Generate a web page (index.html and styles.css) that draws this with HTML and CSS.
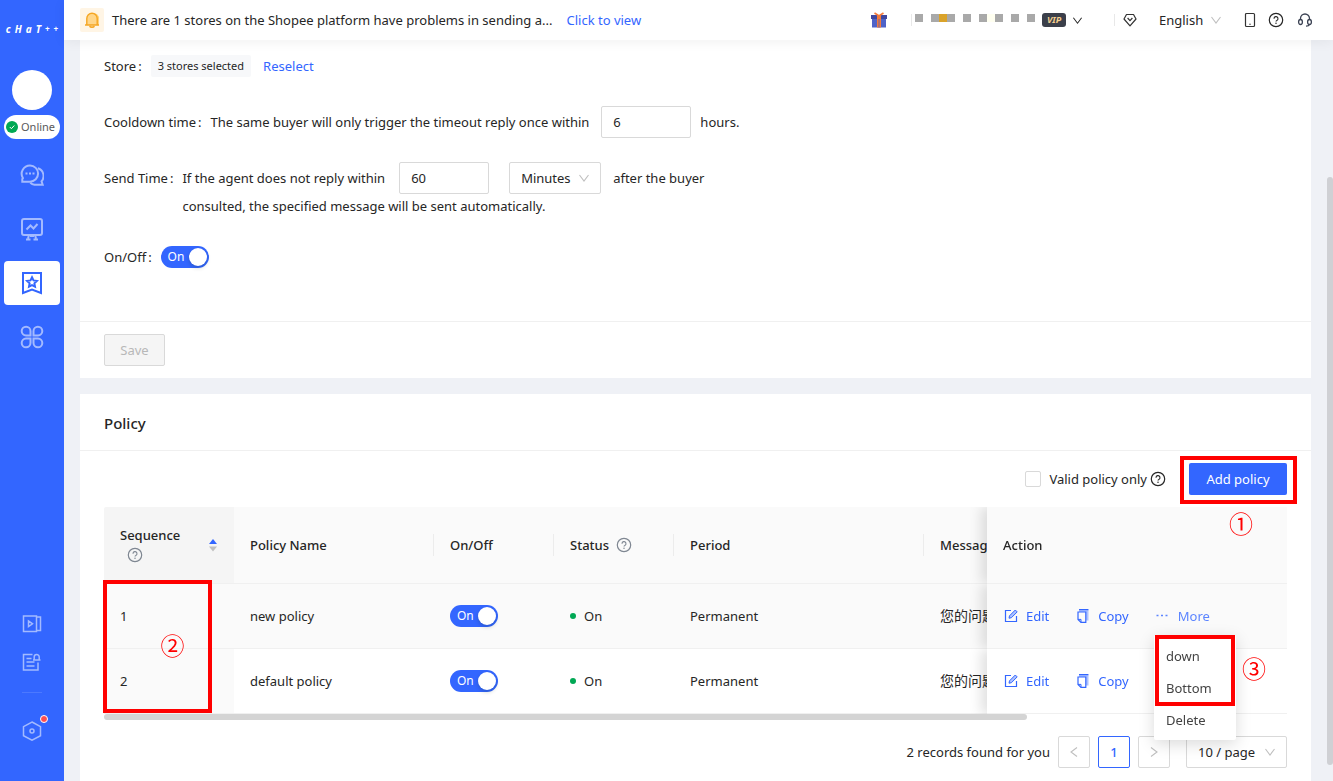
FILE: index.html
```html
<!DOCTYPE html>
<html lang="en">
<head>
<meta charset="utf-8">
<title>Timeout reply</title>
<link rel="stylesheet" href="styles.css">
</head>
<body>
<svg class="sprite" aria-hidden="true">
  <symbol id="help" viewBox="0 0 16 16"><circle cx="8" cy="8" r="6.7" fill="none" stroke="currentColor" stroke-width="1.2"/><path d="M6 6.7a2 2 0 1 1 2.9 1.7c-.6.3-.9.6-.9 1.2" fill="none" stroke="currentColor" stroke-width="1.1"/><circle cx="8" cy="11.3" r=".75" fill="currentColor"/></symbol>
  <symbol id="chevron" viewBox="0 0 12 12"><path d="M1.5 3 6 9l4.500-6" fill="none" stroke="currentColor" stroke-width="1.1"/></symbol>
  <symbol id="edit" viewBox="0 0 14 14"><path d="M7 1.500H1.500v11h11V7" fill="none" stroke="currentColor" stroke-width="1.200"/><path d="M5 9.200l.5-2.400L11.300 1l1.900 1.900-5.800 5.800z" fill="#adc2ff" stroke="currentColor"/></symbol>
  <symbol id="copy" viewBox="0 0 14 14"><path d="M3 .600h9.500v11H10V3H3z" fill="#adc2ff"/><path d="M3 .600h9.400" stroke="currentColor" stroke-width="1.200"/><path d="M2 3h7.800v10.400H5L2 10.400z" fill="none" stroke="currentColor" stroke-width="1.200"/><path d="M2 10.400h3v3" fill="none" stroke="currentColor"/></symbol>
</svg>

<div class="app">
  <aside class="sidebar">
    <div class="logo" aria-label="CHAT++"><span>c</span><span>H</span><span>a</span><span>T</span><small>+</small><small>+</small></div>
    <div class="avatar"></div>
    <button class="presence"><svg viewBox="0 0 12 12" width="12" height="12"><circle cx="6" cy="6" r="6" fill="#00a854"/><path d="M3.800 6l1.600 1.700 2.900-3.200" fill="none" stroke="#fff"/></svg>Online</button>
    <nav class="nav">
      <a href="#" aria-label="Chats"><svg viewBox="0 0 24 24" width="24" height="24"><path d="M10 2.500a8 8 0 0 1 0 16.200H2.300V16l.6-.9A8.300 8.300 0 0 1 10 2.500z"/><path d="M17.800 5.300a8 8 0 0 1 3.700 13l1.200 3.400h-8.200a7 7 0 0 1-4.200-2"/><path d="M5.500 10.500h2M9 10.500h2M12.500 10.500h2" stroke-width="2"/></svg></a>
      <a href="#" aria-label="Statistics"><svg viewBox="0 0 24 24" width="24" height="24"><rect x="2" y="2" width="20" height="16" rx="2"/><path d="M6.500 12.500l4-4 3 3L17.500 7M9 18l-1 3.500M15 18l1 3.500M6 22.500h4.500M13.500 22.500h4.500M10 19h4"/></svg></a>
      <a href="#" class="active" aria-label="Policies"><svg viewBox="0 0 24 24" width="24" height="24"><path d="M3 2h18v20l-9-3.500L3 22z"/><path d="M12 6.300l1.500 3.100 3.400.5-2.500 2.400.6 3.400-3-1.600-3 1.600.6-3.400-2.500-2.400 3.400-.5z"/></svg></a>
      <a href="#" aria-label="Apps"><svg viewBox="0 0 24 24" width="24" height="24"><path d="M10.500 10.500H6A4.400 4.400 0 1 1 10.500 6zM13.500 10.500V6a4.400 4.400 0 1 1 4.500 4.500zM10.500 13.500V18A4.400 4.400 0 1 1 6 13.500zM13.500 13.500H18a4.400 4.400 0 1 1-4.500 4.500z"/></svg></a>
    </nav>
    <div class="tools">
      <a href="#" aria-label="Tutorials"><svg viewBox="0 0 20 20" width="20" height="20"><path d="M1.500 2h13v15.500h-13zM14.500 3h4v13.500h-4M6.500 7v5.500l4-2.700z"/></svg></a>
      <a href="#" aria-label="Notices"><svg viewBox="0 0 20 20" width="20" height="20"><path d="M10.500 2.500h-9v15.500h14.500V10.500M4.500 6.500h5M4.500 10h8M4.500 14h8M11 8h7.500M12.200 8V5a2.500 2.500 0 0 1 5 0v3"/></svg></a>
      <hr>
      <a href="#" class="settings" aria-label="Settings"><svg viewBox="0 0 20 20" width="20" height="20"><path d="M10 1l8.500 4.700v9L10 19.200 1.500 14.700v-9z"/><circle cx="10" cy="10" r="2"/></svg><i class="dot"></i></a>
    </div>
  </aside>

  <div class="page">
    <header class="topbar">
      <span class="bell"><svg viewBox="0 0 18 18" width="18" height="18"><path d="M10 2a5.500 5.500 0 0 1 6 6v6H6z" fill="#ffd27a"/><path d="M2 14h14M3.800 14V7.500a5.200 5.200 0 0 1 10.400 0V14M6.500 15.300c1 1.300 4 1.300 5 0" fill="#ffd68a" stroke="#f5a623" stroke-width="1.400"/></svg></span>
      <span class="notice">There are 1 stores on the Shopee platform have problems in sending a...</span>
      <a href="#">Click to view</a>
      <div class="topbar-end">
        <svg class="gift" viewBox="0 0 16 16" width="16" height="16"><path d="M0 3h16v4H0z" fill="#3f479f"/><path d="M1 7h14v8.500H1z" fill="#4f63c8"/><path d="M6 3h4v12.500H6z" fill="#f47b3b"/><path d="M7.500 7h1v8.500h-1z" fill="#6d62a8"/><path d="M7.500 3.500L3.500 1M8.500 3.500L12.500 1" stroke="#f47b3b" stroke-width="1.600"/></svg>
        <i class="sep"></i>
        <svg class="account" viewBox="0 0 120 16" width="120" height="16" aria-hidden="true"><path fill="#a9a9a9" d="M0 2h8v8H0zM16 2h24v8H16zM48 2h8v8h-8zM64 2h8v8h-8zM80 2h8v8h-8zM96 2h8v8h-8zM112 2h8v8h-8z"/><path fill="#daa32a" d="M24 2h8v8h-8z"/><path fill="#fffff0" d="M72 2h8v8h-8z"/></svg>
        <span class="vip">VIP</span>
        <svg class="caret dark" width="11" height="11"><use href="#chevron"/></svg>
        <i class="sep wide"></i>
        <svg class="gem" viewBox="0 0 14 14" width="14" height="14"><path d="M3.500 1.500h7L13 6l-6 6.800L1 6z" fill="none" stroke="#333" stroke-width="1.200" stroke-linejoin="round"/><path d="M4.600 5L7 7.700 9.400 5" fill="none" stroke="#333" stroke-width="1.200"/></svg>
        <label class="language"><select aria-label="Language"><option>English</option></select><svg class="caret" width="12" height="12"><use href="#chevron"/></svg></label>
        <svg class="phone" viewBox="0 0 16 16" width="16" height="16"><rect x="3.500" y="1.500" width="9" height="13" rx="1" fill="none" stroke="#333" stroke-width="1.200"/><circle cx="8" cy="12.300" r=".7" fill="#333"/></svg>
        <svg class="help dark" width="16" height="16"><use href="#help"/></svg>
        <svg class="headset" viewBox="0 0 16 16" width="16" height="16"><g fill="none" stroke="#3c4354" stroke-width="1.300"><path d="M3.500 8V6.500a4.500 4.500 0 0 1 9 0V8M12.500 12.500c-.5 1.300-1.800 1.600-3.500 1.700"/><ellipse cx="3.500" cy="10" rx="1.900" ry="2.500"/><ellipse cx="12.500" cy="10" rx="1.900" ry="2.500"/></g></svg>
      </div>
    </header>

    <main class="content">
      <section class="card">
        <form class="form">
          <div class="row"><span class="label">Store</span><span class="tag">3 stores selected</span><a href="#">Reselect</a></div>
          <div class="row"><label class="label" for="cooldown">Cooldown time</label><span>The same buyer will only trigger the timeout reply once within</span><input class="field" id="cooldown" value="6"><span>hours.</span></div>
          <div class="row top"><label class="label" for="send">Send Time</label>
            <div><div class="line"><span>If the agent does not reply within</span><input class="field send" id="send" value="60"><span class="select unit"><select aria-label="Unit"><option>Minutes</option></select><svg class="caret" width="12" height="12"><use href="#chevron"/></svg></span><span>after the buyer</span></div>
            <div class="line-two">consulted, the specified message will be sent automatically.</div></div>
          </div>
          <div class="row"><span class="label">On/Off</span><label class="switch"><input type="checkbox" checked aria-label="On/Off"><span>On</span></label></div>
        </form>
        <footer class="card-footer"><button class="save" disabled>Save</button></footer>
      </section>

      <section class="card">
        <h2>Policy</h2>
        <div class="policy-body">
          <div class="toolbar">
            <input type="checkbox" id="valid"><label for="valid">Valid policy only</label><svg class="help dark" width="16" height="16"><use href="#help"/></svg>
            <div class="add-wrap"><button class="add">Add policy</button><span class="mark mark-add"></span><b class="num num-one">①</b></div>
          </div>
          <div class="table-area">
            <div class="table-scroll">
              <table>
                <colgroup><col class="c-seq"><col class="c-name"><col class="c-on"><col class="c-on"><col class="c-period"><col class="c-msg"><col class="c-act"></colgroup>
                <thead><tr>
                  <th class="seq"><div class="sorter"><span>Sequence<svg class="help below" width="16" height="16"><use href="#help"/></svg></span><svg viewBox="0 0 8 14" width="8" height="14"><path d="M0 6l4-5 4 5z" fill="#36f"/><path d="M0 8.500h8l-4 5z" fill="#bfbfbf"/></svg></div></th>
                  <th class="split">Policy Name</th><th class="split">On/Off</th>
                  <th class="split"><span class="with-help">Status<svg class="help" width="16" height="16"><use href="#help"/></svg></span></th>
                  <th class="split">Period</th><th>Message</th><th class="act">Action</th>
                </tr></thead>
                <tbody>
                  <tr class="hover"><td class="seq">1</td><td>new policy</td><td><label class="switch"><input type="checkbox" checked aria-label="new policy"><span>On</span></label></td><td><span class="status">On</span></td><td>Permanent</td><td class="msg">您的问题</td>
                    <td class="act"><div class="actions"><a href="#"><svg width="14" height="14"><use href="#edit"/></svg>Edit</a><a href="#"><svg width="14" height="14"><use href="#copy"/></svg>Copy</a><a href="#" class="more"><svg viewBox="0 0 12 14" width="12" height="14"><path d="M.500 6.500h2M5 6.500h2M9.500 6.500h2" stroke="currentColor" stroke-width="1.500"/></svg>More</a></div></td></tr>
                  <tr><td class="seq">2</td><td>default policy</td><td><label class="switch"><input type="checkbox" checked aria-label="default policy"><span>On</span></label></td><td><span class="status">On</span></td><td>Permanent</td><td class="msg">您的问题</td>
                    <td class="act"><div class="actions"><a href="#"><svg width="14" height="14"><use href="#edit"/></svg>Edit</a><a href="#"><svg width="14" height="14"><use href="#copy"/></svg>Copy</a></div></td></tr>
                </tbody>
              </table>
            </div>
            <div class="h-thumb"></div>
            <div class="mark mark-seq"><b class="num">②</b></div>
            <div class="menu"><button>down</button><button>Bottom</button><button>Delete</button><span class="mark mark-menu"></span><b class="num num-three">③</b></div>
          </div>
          <div class="pager">
            <span>2 records found for you</span>
            <button aria-label="Previous" disabled><svg class="turn-right" width="12" height="12"><use href="#chevron"/></svg></button>
            <button class="current">1</button>
            <button aria-label="Next" disabled><svg class="turn-left" width="12" height="12"><use href="#chevron"/></svg></button>
            <span class="select size"><select aria-label="Page size"><option>10 / page</option></select><svg class="caret" width="12" height="12"><use href="#chevron"/></svg></span>
          </div>
        </div>
      </section>
    </main>
    <div class="v-thumb"></div>
  </div>
</div>
</body>
</html>
```
FILE: styles.css
```css
* { box-sizing: border-box; }
body { margin: 0; font: 13px/22px "Noto Sans", "Noto Sans CJK SC", sans-serif; color: #262626; background: #eff1f6; }
button, input, select { font: inherit; color: inherit; margin: 0; }
button { cursor: pointer; }
a { color: #36f; text-decoration: none; }
svg { display: block; flex: none; }
.sprite { position: absolute; width: 0; height: 0; }
.app { display: flex; height: 100vh; overflow: hidden; }

.sidebar { width: 64px; flex: none; background: #36f; display: flex; flex-direction: column; align-items: center; padding: 20px 0 40px; }
.logo { display: flex; align-items: center; gap: 4px; height: 18px; color: #fff; font: italic bold 10px/18px "Noto Sans", sans-serif; }
.logo small { font-size: 8px; }
.avatar { width: 40px; height: 40px; border-radius: 50%; background: #fff; margin-top: 32px; }
.presence { display: flex; align-items: center; gap: 3px; width: 56px; height: 24px; margin-top: 5px; padding: 0 2px; border: 0; border-radius: 12px; background: #fff; color: #595959; font-size: 11px; }
.nav { display: grid; gap: 10px; margin-top: 14px; }
.nav a { width: 56px; height: 44px; border-radius: 4px; display: grid; place-items: center; color: #a3baff; }
.nav .active { background: #fff; color: #36f; }
.nav svg, .tools svg { fill: none; stroke: currentColor; stroke-width: 2; }
.tools { margin-top: auto; display: flex; flex-direction: column; align-items: center; gap: 18px; }
.tools a { position: relative; color: #a3baff; }
.tools svg { stroke-width: 1.5; }
.tools hr { width: 20px; border: 0; border-top: 1px solid #4c79ff; margin: 2px 0 10px; }
.dot { position: absolute; top: -6px; right: -6px; width: 8px; height: 8px; border-radius: 50%; border: 1px solid #fff; background: #ff4d4f; }

.page { flex: 1; min-width: 0; display: flex; flex-direction: column; position: relative; }
.topbar { position: relative; z-index: 2; flex: none; height: 40px; background: #fff; display: flex; align-items: center; padding: 0 20px 0 16px; box-shadow: 0 2px 12px rgba(0, 0, 0, .06); }
.bell { width: 24px; height: 24px; background: #fff5e5; border-radius: 2px; display: grid; place-items: center; margin-right: 8px; }
.notice { margin-right: 14px; white-space: nowrap; }
.topbar-end { margin-left: auto; display: flex; align-items: center; }
.sep { width: 1px; height: 12px; background: #e8e8e8; margin: 0 3px 0 24px; }
.sep.wide { margin: 0 8px 0 31px; }
.vip { width: 24px; height: 14px; margin: 0 6px 0 7px; border-radius: 3px; background: #3b3f4a; color: #f5cf8e; font: italic bold 9px/14px "Noto Sans", sans-serif; text-align: center; }
.caret { color: #bfbfbf; }
.dark { color: #262626; }
.gem { margin-right: 22px; }
.language { display: flex; align-items: center; gap: 6px; }
.language select, .select select { appearance: none; border: 0; background: none; padding: 0; outline: 0; }
.phone { margin: 0 10px 0 20px; }
.headset { margin-left: 13px; }

.content { padding: 0 22px 0 16px; display: grid; gap: 16px; }
.card { background: #fff; min-width: 0; }
.form { padding: 10px 24px 48px; display: grid; gap: 24px; }
.row { display: flex; align-items: center; min-height: 32px; }
.row.top { align-items: flex-start; }
.row.top .label { line-height: 32px; }
.label { margin-right: 8px; }
.label::after { content: ":"; margin: 0 1px 0 2px; }
.tag { padding: 0 7px; margin-right: 12px; background: #f7f8fa; border-radius: 2px; font-size: 11px; }
.field { width: 90px; height: 32px; border: 1px solid #d9d9d9; border-radius: 2px; padding: 0 11px; margin: 0 9px 0 12px; background: #fff; }
.field.send { margin: 0 20px 0 14px; }
.line { display: flex; align-items: center; }
.line-two { line-height: 24px; margin-bottom: -1px; }
.select { display: flex; align-items: center; justify-content: space-between; height: 32px; border: 1px solid #d9d9d9; border-radius: 2px; background: #fff; padding: 0 10px 0 11px; }
.unit { width: 92px; margin-right: 12px; }
.switch { position: relative; display: block; width: 48px; height: 22px; border-radius: 11px; background: #36f; color: #fff; font-size: 12px; line-height: 22px; padding-left: 7px; cursor: pointer; }
.switch input { position: absolute; inset: 0; width: 100%; height: 100%; opacity: 0; }
.switch::after { content: ""; position: absolute; top: 2px; right: 2px; width: 18px; height: 18px; border-radius: 50%; background: #fff; box-shadow: 0 2px 4px rgba(0, 35, 11, .2); }
.card-footer { border-top: 1px solid #f0f0f0; padding: 12px 24px; }
.save { display: block; width: 61px; height: 32px; border: 1px solid #d9d9d9; border-radius: 2px; background: #f5f5f5; color: #b8b8b8; }

h2 { margin: 0; padding: 18px 24px 16px; border-bottom: 1px solid #f0f0f0; font-size: 15px; line-height: 22px; font-weight: 500; }
.policy-body { padding: 12px 24px 24px; }
.toolbar { display: flex; align-items: center; justify-content: flex-end; }
.toolbar input { appearance: none; width: 16px; height: 16px; border: 1px solid #d9d9d9; border-radius: 2px; margin-right: 8px; }
.toolbar .help { margin: 0 23px 0 3px; }
.add-wrap { position: relative; }
.add { display: block; width: 98px; height: 32px; border: 0; border-radius: 2px; background: #36f; color: #fff; padding: 0; }
.table-area { position: relative; margin-top: 12px; }
.table-scroll { overflow: hidden; border-radius: 2px 2px 0 0; }
table { width: 1520px; table-layout: fixed; border-collapse: separate; border-spacing: 0; }
.c-seq { width: 130px; } .c-name { width: 200px; } .c-on { width: 120px; } .c-period { width: 250px; } .c-msg { width: 400px; } .c-act { width: 300px; }
th, td { text-align: left; padding: 0 16px; border-bottom: 1px solid #f0f0f0; background: #fff; position: relative; }
th { height: 77px; background: #fafafa; font-weight: 500; }
td { height: 65px; }
.msg { font-size: 14px; }
.hover td, td.seq { background: #fafafa; }
th.seq { background: #f5f5f5; }
.split::after { content: ""; position: absolute; right: 0; top: 27px; width: 1px; height: 22px; background: #ececec; }
.sorter { display: flex; align-items: center; justify-content: space-between; padding-right: 1px; }
.help { color: #7f8792; }
.help.dark { color: #262626; }
.help.below { margin: 1px 0 4px 7px; }
.with-help { display: flex; align-items: center; gap: 7px; }
th.act, td.act { position: sticky; right: 0; z-index: 1; box-shadow: -6px 0 12px rgba(0, 0, 0, .12); clip-path: inset(0 0 0 -20px); }
.status { display: flex; align-items: center; gap: 8px; }
.status::before { content: ""; width: 6px; height: 6px; border-radius: 50%; background: #00a854; }
.actions { display: flex; gap: 27px; padding-left: 1px; }
.actions a { display: flex; align-items: center; gap: 8px; }
.actions .more { color: #5c85ff; gap: 10px; }
.h-thumb { position: absolute; left: 0; bottom: -6px; width: 78%; height: 6px; border-radius: 3px; background: #d4d4d4; }
.menu { position: absolute; z-index: 2; top: 128px; right: 51px; width: 82px; padding: 5px 0 4px; background: #fff; border-radius: 2px; box-shadow: 0 4px 16px rgba(0, 0, 0, .15); }
.menu button { display: block; width: 100%; height: 32px; padding: 0 12px; border: 0; background: none; text-align: left; color: #434343; }
.mark { position: absolute; border: 4px solid #f00; pointer-events: none; }
.mark-add { inset: -7px -10px -9px -9px; }
.mark-seq { left: -1px; top: 73px; width: 109px; height: 133px; z-index: 2; display: grid; place-items: center; padding: 0 0 4px 30px; }
.mark-menu { inset: 0 1px 34px 1px; }
.num { font: 24px/24px "Noto Sans CJK SC", sans-serif; color: #f00; }
.num-one { position: absolute; z-index: 3; left: 40px; top: 48px; }
.num-three { position: absolute; left: 88px; top: 21px; }
.pager { display: flex; align-items: center; justify-content: flex-end; gap: 8px; margin-top: 22px; }
.pager button { width: 32px; height: 32px; padding: 0; border: 1px solid #d9d9d9; border-radius: 2px; background: #fff; display: grid; place-items: center; color: #bfbfbf; }
.pager .current { border-color: #36f; color: #36f; font-weight: 500; }
.turn-right { transform: rotate(90deg); }
.turn-left { transform: rotate(-90deg); }
.size { width: 101px; margin-left: 8px; }
.v-thumb { position: absolute; right: 0; top: 177px; width: 6px; height: 588px; border-radius: 3px; background: #cfd0d4; }
```
